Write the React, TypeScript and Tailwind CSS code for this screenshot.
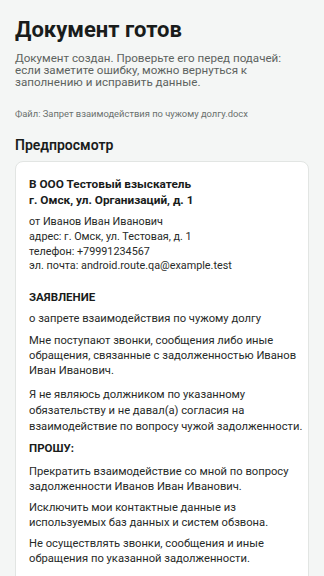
export default function App() {
  return (
    <div className="w-[324px] h-[576px] overflow-hidden bg-[#f4f6f5] px-[15px] font-['Roboto',sans-serif]">
      <h1 className="pt-[17px] text-[22px] leading-[26px] font-bold text-[#191c1b] whitespace-nowrap">
        Документ готов
      </h1>
      <p className="mt-[9px] text-[11.6px] leading-[12.2px] text-[#5d6360] whitespace-nowrap">
        Документ создан. Проверьте его перед подачей:
        <br />
        если заметите ошибку, можно вернуться к
        <br />
        заполнению и исправить данные.
      </p>
      <p className="mt-[19px] text-[9.4px] leading-[12px] text-[#6a706d] whitespace-nowrap">
        Файл: Запрет взаимодействия по чужому долгу.docx
      </p>
      <h2 className="mt-[16px] text-[14px] leading-[18px] font-semibold text-[#191c1b] whitespace-nowrap">
        Предпросмотр
      </h2>
      <div className="mt-[7.5px] rounded-[8px] border border-[#e2e5e3] bg-white px-[13px] pt-[14.7px] pb-[20px] text-[11.2px] text-[#272a28] whitespace-nowrap">
        <p className="font-bold text-[11.8px] leading-[15.7px] text-[#191c1b]">
          В ООО Тестовый взыскатель
          <br />
          г. Омск, ул. Организаций, д. 1
        </p>
        <p className="mt-[6.9px] text-[10.8px] leading-[14.7px]">
          от Иванов Иван Иванович
          <br />
          адрес: г. Омск, ул. Тестовая, д. 1
          <br />
          телефон: +79991234567
          <br />
          эл. почта: android.route.qa@example.test
        </p>
        <p className="mt-[15.8px] font-bold text-[11.5px] leading-[15px] text-[#191c1b]">ЗАЯВЛЕНИЕ</p>
        <p className="mt-[6.7px] leading-[15px]">о запрете взаимодействия по чужому долгу</p>
        <p className="mt-[6.7px] leading-[15px]">
          Мне поступают звонки, сообщения либо иные
          <br />
          обращения, связанные с задолженностью Иванов
          <br />
          Иван Иванович.
        </p>
        <p className="mt-[8.8px] leading-[16px]">
          Я не являюсь должником по указанному
          <br />
          обязательству и не давал(а) согласия на
          <br />
          взаимодействие по вопросу чужой задолженности.
        </p>
        <p className="mt-[6.4px] font-bold text-[11.5px] leading-[15px] text-[#191c1b]">ПРОШУ:</p>
        <p className="mt-[7.3px] leading-[15.3px]">
          Прекратить взаимодействие со мной по вопросу
          <br />
          задолженности Иванов Иван Иванович.
        </p>
        <p className="mt-[5.4px] leading-[15.3px]">
          Исключить мои контактные данные из
          <br />
          используемых баз данных и систем обзвона.
        </p>
        <p className="mt-[5.4px] leading-[15.3px]">
          Не осуществлять звонки, сообщения и иные
          <br />
          обращения по указанной задолженности.
        </p>
      </div>
    </div>
  );
}
